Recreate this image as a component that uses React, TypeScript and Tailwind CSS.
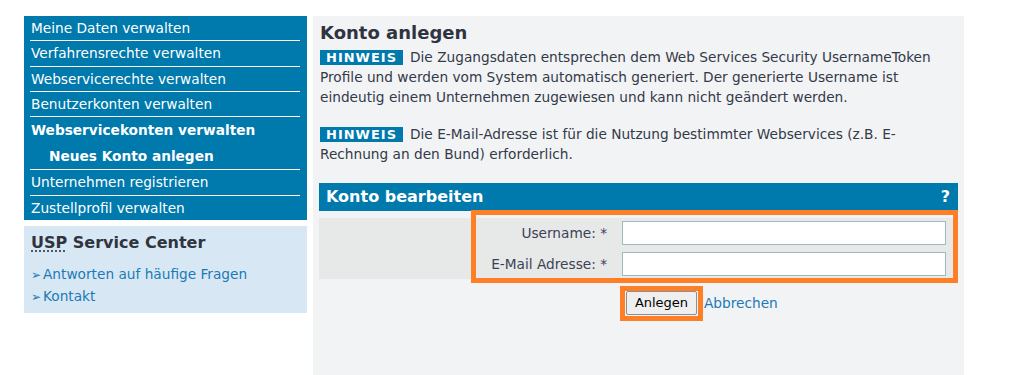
import type { ReactNode } from "react";

const navBlue = "bg-[#0079ad]";

type NavItem = { label: string; h: string; bold?: boolean; sub?: boolean; line?: boolean };

const navItems: NavItem[] = [
  { label: "Meine Daten verwalten", h: "h-[24px]", line: true },
  { label: "Verfahrensrechte verwalten", h: "h-[25px]", line: true },
  { label: "Webservicerechte verwalten", h: "h-[24px]", line: true },
  { label: "Benutzerkonten verwalten", h: "h-[24px]", line: true },
  { label: "Webservicekonten verwalten", h: "h-[26px]", bold: true },
  { label: "Neues Konto anlegen", h: "h-[26px]", bold: true, sub: true, line: true },
  { label: "Unternehmen registrieren", h: "h-[25px]", line: true },
  { label: "Zustellprofil verwalten", h: "h-[24px]" },
];

export default function App() {
  return (
    <div
      className="flex h-[375px] w-[1022px] gap-[6px] overflow-hidden bg-white pl-[24px] pt-[16px] text-[13.7px]"
      style={{ fontFamily: '"DejaVu Sans", Verdana, sans-serif' }}
    >
      <Sidebar />
      <Main />
    </div>
  );
}

function Sidebar() {
  return (
    <aside className="flex w-[283px] shrink-0 flex-col gap-[6px]">
      <nav className={`${navBlue} flex flex-col text-white`}>
        {navItems.map((item) => (
          <div key={item.label}>
            <div
              className={`flex items-center ${item.h} ${item.sub ? "pl-[25px]" : "pl-[7px]"} ${
                item.bold ? "font-bold" : ""
              }`}
            >
              {item.label}
            </div>
            {item.line ? <div className="ml-[6px] mr-[7px] h-px bg-white" /> : null}
          </div>
        ))}
      </nav>

      <section className="h-[87px] bg-[#d7e8f4] px-[7px] pt-[5px]">
        <h2 className="m-0 text-[16px] font-bold leading-[24px] text-[#2f3440]">
          <abbr className="no-underline [text-decoration:underline_dotted] [text-underline-offset:3px]">
            USP
          </abbr>{" "}
          Service Center
        </h2>
        <ul className="mt-[9px] flex flex-col text-[#1b7ab5]">
          <LinkRow>Antworten auf häufige Fragen</LinkRow>
          <LinkRow>Kontakt</LinkRow>
        </ul>
      </section>
    </aside>
  );
}

function LinkRow({ children }: { children: ReactNode }) {
  return (
    <li className="flex h-[22px] items-center gap-[3px] leading-none">
      <span className="w-[9px] text-[12px] text-[#1b7ab5]">➢</span>
      <span>{children}</span>
    </li>
  );
}

function Hinweis() {
  return (
    <span className="mr-[7px] inline-block bg-[#0079ad] px-[6px] text-[13px] font-bold leading-[15px] tracking-[1px] text-white">
      HINWEIS
    </span>
  );
}

function Main() {
  return (
    <main className="h-full w-[651px] shrink-0 bg-[#f2f3f5] px-[6px] text-[13.7px] text-[#333a48]">
      <h1 className="m-0 pl-[1px] pt-[3px] text-[18px] font-bold leading-[28px] text-[#2f3440]">
        Konto anlegen
      </h1>
      <p className="m-0 pl-[1px] leading-[20px]">
        <Hinweis />
        Die Zugangsdaten entsprechen dem Web Services Security UsernameToken Profile und werden vom
        System automatisch generiert. Der generierte Username ist eindeutig einem Unternehmen
        zugewiesen und kann nicht geändert werden.
      </p>
      <p className="m-0 mt-[17px] pl-[1px] leading-[20px]">
        <Hinweis />
        Die E-Mail-Adresse ist für die Nutzung bestimmter Webservices (z.B. E-Rechnung an den Bund)
        erforderlich.
      </p>

      <div className="relative mt-[19px]">
        <div className="flex h-[28px] items-center justify-between bg-[#0079ad] px-[7px] text-[16px] font-bold text-white">
          <span>Konto bearbeiten</span>
          <span className="pr-[1px] text-[16px]">?</span>
        </div>

        <div className="mt-[7px] grid grid-cols-[288px_324px] gap-x-[15px] gap-y-[7px] bg-[#e7e8e8] py-[3px] text-[#3b4256]">
          <label className="flex h-[24px] items-center justify-end">Username: *</label>
          <input className="h-[24px] border border-[#9fbcbc] bg-white px-1 outline-none" />
          <label className="flex h-[24px] items-center justify-end">E-Mail Adresse: *</label>
          <input className="h-[24px] border border-[#9fbcbc] bg-white px-1 outline-none" />
        </div>

        <div className="pointer-events-none absolute left-[152px] top-[27px] h-[73px] w-[487px] border-[5px] border-[#ff7f27]" />

        <div className="mt-[7px] flex items-center gap-[1px] pl-[301px]">
          <span className="inline-flex border-[5px] border-[#ff7f27] px-[1px] pb-[1px]">
            <button
              type="button"
              className="h-[24px] w-[71px] rounded-[2px] border border-[#8f8f8f] bg-[#efefef] text-[13px] text-black"
            >
              Anlegen
            </button>
          </span>
          <a className="text-[13.7px] text-[#1b7ab5]">Abbrechen</a>
        </div>
      </div>
    </main>
  );
}
